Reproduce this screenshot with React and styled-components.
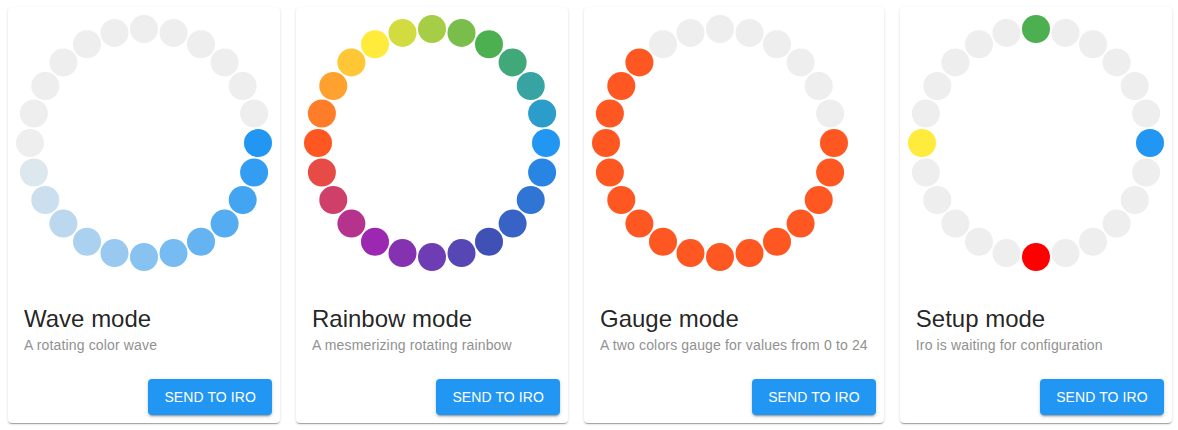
import React from "react";
import styled, { createGlobalStyle } from "styled-components";

const GlobalStyle = createGlobalStyle`
	body {
		margin: 0;
		background: #ffffff;
		font-family: "Liberation Sans", Arial, sans-serif;
	}
`;

const GREY = "#eeeeee";
const BLUE = "#2196f3";

const hex = (c) => [1, 3, 5].map((i) => parseInt(c.slice(i, i + 2), 16));
const mix = (a, b, t) => {
	const x = hex(a);
	const y = hex(b);
	return (
		"#" +
		x
			.map((v, i) => Math.round(v + (y[i] - v) * t).toString(16).padStart(2, "0"))
			.join("")
	);
};

// one colour per led, led 0 at 3 o'clock, going clockwise
const wave = Array.from({ length: 24 }, (_, i) => (i < 12 ? mix(BLUE, GREY, i / 12) : GREY));
const anchors = [BLUE, "#3f51b5", "#9c27b0", "#ff5722", "#ffeb3b", "#4caf50", BLUE];
const rainbow = Array.from({ length: 24 }, (_, i) =>
	mix(anchors[Math.floor(i / 4)], anchors[Math.floor(i / 4) + 1], (i % 4) / 4)
);
const gauge = Array.from({ length: 24 }, (_, i) => (i < 16 ? "#ff5722" : GREY));
const setup = Array.from({ length: 24 }, (_, i) =>
	({ 0: BLUE, 6: "#ff0000", 12: "#ffeb3b", 18: "#4caf50" }[i] || GREY)
);

const modes = [
	{ title: "Wave mode", text: "A rotating color wave", leds: wave },
	{ title: "Rainbow mode", text: "A mesmerizing rotating rainbow", leds: rainbow },
	{ title: "Gauge mode", text: "A two colors gauge for values from 0 to 24", leds: gauge },
	{ title: "Setup mode", text: "Iro is waiting for configuration", leds: setup },
];

const CardRow = styled.div`
	display: flex;
	align-items: flex-start;
	gap: 16px;
	padding: 7px 8px;
`;

const Card = styled.div`
	flex: none;
	display: flex;
	flex-direction: column;
	background: #ffffff;
	border-radius: 4px;
	box-shadow: 0px 2px 1px -1px rgba(0, 0, 0, 0.2), 0px 1px 1px 0px rgba(0, 0, 0, 0.14),
		0px 1px 3px 0px rgba(0, 0, 0, 0.12);
`;

const RingBox = styled.div`
	align-self: flex-start;
	padding: 8px 8px 16px 8px;
	svg {
		display: block;
	}
`;

const Content = styled.div`
	padding: 16px;
`;

const Title = styled.h5`
	margin: 0;
	font-size: 24px;
	font-weight: 400;
	line-height: 32px;
	color: rgba(0, 0, 0, 0.87);
`;

const Subtitle = styled.p`
	margin: 0;
	font-size: 14px;
	line-height: 20px;
	letter-spacing: 0.15px;
	color: #919191;
	white-space: nowrap;
`;

const Actions = styled.div`
	display: flex;
	justify-content: flex-end;
	padding: 8px;
`;

const SendButton = styled.button`
	height: 36px;
	padding: 0 16px;
	border: 0;
	border-radius: 4px;
	background-color: ${BLUE};
	color: #ffffff;
	font-family: "Liberation Sans", Arial, sans-serif;
	font-size: 14px;
	letter-spacing: 0.1px;
	text-transform: uppercase;
	box-shadow: 0px 3px 1px -2px rgba(0, 0, 0, 0.2), 0px 2px 2px 0px rgba(0, 0, 0, 0.14),
		0px 1px 5px 0px rgba(0, 0, 0, 0.12);
	cursor: pointer;
`;

const Ring = ({ leds }) => (
	<svg width="256" height="256" viewBox="0 0 256 256">
		{leds.map((c, i) => {
			const a = (i * 15 * Math.PI) / 180;
			return <circle key={i} cx={128 + 114 * Math.cos(a)} cy={128 + 114 * Math.sin(a)} r="14" fill={c} />;
		})}
	</svg>
);

const ModeCard = ({ mode }) => (
	<Card>
		<RingBox>
			<Ring leds={mode.leds} />
		</RingBox>
		<Content>
			<Title>{mode.title}</Title>
			<Subtitle>{mode.text}</Subtitle>
		</Content>
		<Actions>
			<SendButton>Send to Iro</SendButton>
		</Actions>
	</Card>
);

const App = () => {
	return (
		<>
			<GlobalStyle />
			<CardRow>
				{modes.map((m) => (
					<ModeCard key={m.title} mode={m} />
				))}
			</CardRow>
		</>
	);
};

export default App;
